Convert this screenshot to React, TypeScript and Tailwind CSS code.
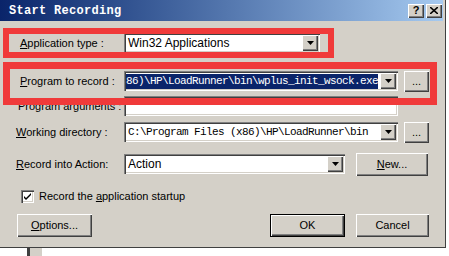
import React from "react";

const raised =
  "bg-[#d4d0c8] shadow-[inset_1px_1px_0_#ffffff,inset_-1px_-1px_0_#404040,inset_-2px_-2px_0_#808080]";
const sunken =
  "bg-white shadow-[inset_1px_1px_0_#808080,inset_2px_2px_0_#404040,inset_-1px_-1px_0_#ffffff,inset_-2px_-2px_0_#d4d0c8]";

const Arrow = () => (
  <div className={`w-[16px] h-[16px] flex items-center justify-center shrink-0 ${raised}`}>
    <svg width="7" height="4" viewBox="0 0 7 4">
      <path d="M0 0h7L3.5 4z" fill="#000" />
    </svg>
  </div>
);

const Label = ({ k, rest, className = "" }: { k: string; rest: string; className?: string }) => (
  <span className={`text-[11px] text-black whitespace-nowrap ${className}`}>
    <span className="underline">{k}</span>
    {rest}
  </span>
);

const Combo = ({
  width,
  children,
}: {
  width: string;
  children?: React.ReactNode;
}) => (
  <div className={`${width} h-[20px] flex items-center p-[2px] ${sunken}`}>
    <div className="flex-1 overflow-hidden flex items-center h-full">{children}</div>
    <Arrow />
  </div>
);

const Btn = ({ className, children }: { className: string; children: React.ReactNode }) => (
  <div className={`${className} flex items-center justify-center text-[11px] text-black ${raised}`}>
    {children}
  </div>
);

const mono = "font-['Liberation_Mono',monospace] text-[11px] tracking-[-0.6px]";

export default function App() {
  return (
    <div className="w-[449px] h-[256px] bg-white relative overflow-hidden font-['Liberation_Sans',Arial,sans-serif]">
      <div className="w-[446px] h-[248px] bg-[#d4d0c8] border-r border-b border-[#404040] flex flex-col">
        {/* title bar */}
        <div className="h-[21px] mr-[2px] flex items-center bg-gradient-to-r from-[#0a246a] to-[#a6caf0]">
          <span className="ml-[9px] text-white font-bold text-[12px] tracking-[0.3px] font-['Liberation_Mono',monospace]">
            Start Recording
          </span>
          <div className="ml-auto mr-[1px] flex gap-[2px]">
            <Btn className="w-[16px] h-[14px] font-bold text-[11px]">?</Btn>
            <Btn className="w-[16px] h-[14px]">
              <svg width="8" height="7" viewBox="0 0 8 7">
                <path d="M0 0l8 7M8 0L0 7" stroke="#000" strokeWidth="1.6" />
              </svg>
            </Btn>
          </div>
        </div>

        {/* Application type */}
        <div className="mt-[12px] h-[20px] flex items-center pl-[20px]">
          <Label k="A" rest="pplication type :" className="w-[104px]" />
          <Combo width="w-[196px]">
            <span className="text-[12px] text-black pl-[2px]">Win32 Applications</span>
          </Combo>
        </div>

        {/* Program to record */}
        <div className="mt-[18px] h-[20px] flex items-center pl-[20px]">
          <Label k="P" rest="rogram to record :" className="w-[104px]" />
          <Combo width="w-[274px]">
            <span className={`bg-[#0a246a] text-white h-[15px] flex items-center whitespace-nowrap ${mono}`}>
              86)\HP\LoadRunner\bin\wplus_init_wsock.exe
            </span>
          </Combo>
          <Btn className="ml-[6px] w-[25px] h-[21px]">...</Btn>
        </div>

        {/* Program arguments */}
        <div className="mt-[5px] h-[20px] flex items-center pl-[18px]">
          <Label k="" rest="Program arguments :" className="w-[106px]" />
          <div className={`w-[274px] h-[20px] ${sunken}`} />
        </div>

        {/* Working directory */}
        <div className="mt-[6px] h-[20px] flex items-center pl-[16px]">
          <Label k="W" rest="orking directory :" className="w-[108px]" />
          <Combo width="w-[274px]">
            <span className={`text-black whitespace-nowrap pl-[2px] ${mono}`}>
              C:\Program Files (x86)\HP\LoadRunner\bin
            </span>
          </Combo>
          <Btn className="ml-[6px] w-[25px] h-[21px]">...</Btn>
        </div>

        {/* Record into Action */}
        <div className="mt-[12px] h-[20px] flex items-center pl-[16px]">
          <Label k="R" rest="ecord into Action:" className="w-[108px]" />
          <Combo width="w-[221px]">
            <span className="text-[12px] text-black pl-[2px]">Action</span>
          </Combo>
          <Btn className="ml-[11px] w-[72px] h-[23px]">
            <span className="underline">N</span>ew...
          </Btn>
        </div>

        {/* checkbox */}
        <div className="mt-[15px] h-[14px] flex items-center pl-[21px]">
          <div className={`w-[13px] h-[13px] flex items-center justify-center ${sunken}`}>
            <svg width="7" height="7" viewBox="0 0 7 7">
              <path d="M0 3l2 2 5-5v2L2 7 0 5z" fill="#000" />
            </svg>
          </div>
          <span className="ml-[5px] text-[11px] text-black">
            Record the <span className="underline">a</span>pplication startup
          </span>
        </div>

        {/* buttons */}
        <div className="mt-[11px] h-[23px] flex items-center pl-[17px]">
          <Btn className="w-[75px] h-[23px]">
            <span className="underline">O</span>ptions...
          </Btn>
          <div className="ml-auto flex gap-[11px] mr-[16px]">
            <div className="border border-black">
              <Btn className="w-[73px] h-[21px]">OK</Btn>
            </div>
            <Btn className="w-[73px] h-[23px]">Cancel</Btn>
          </div>
        </div>
      </div>
      <div className="ml-[27px] w-[15px] h-[8px] bg-[#d4d0c8] border-l-[3px] border-[#404040]" />

      {/* annotation highlights */}
      <div className="absolute left-[3px] top-[28px] w-[331px] h-[30px] border-[6px] border-[#f03a3a]" />
      <div className="absolute left-[3px] top-[62px] w-[434px] h-[43px] border-[7px] border-[#f03a3a]" />
    </div>
  );
}
